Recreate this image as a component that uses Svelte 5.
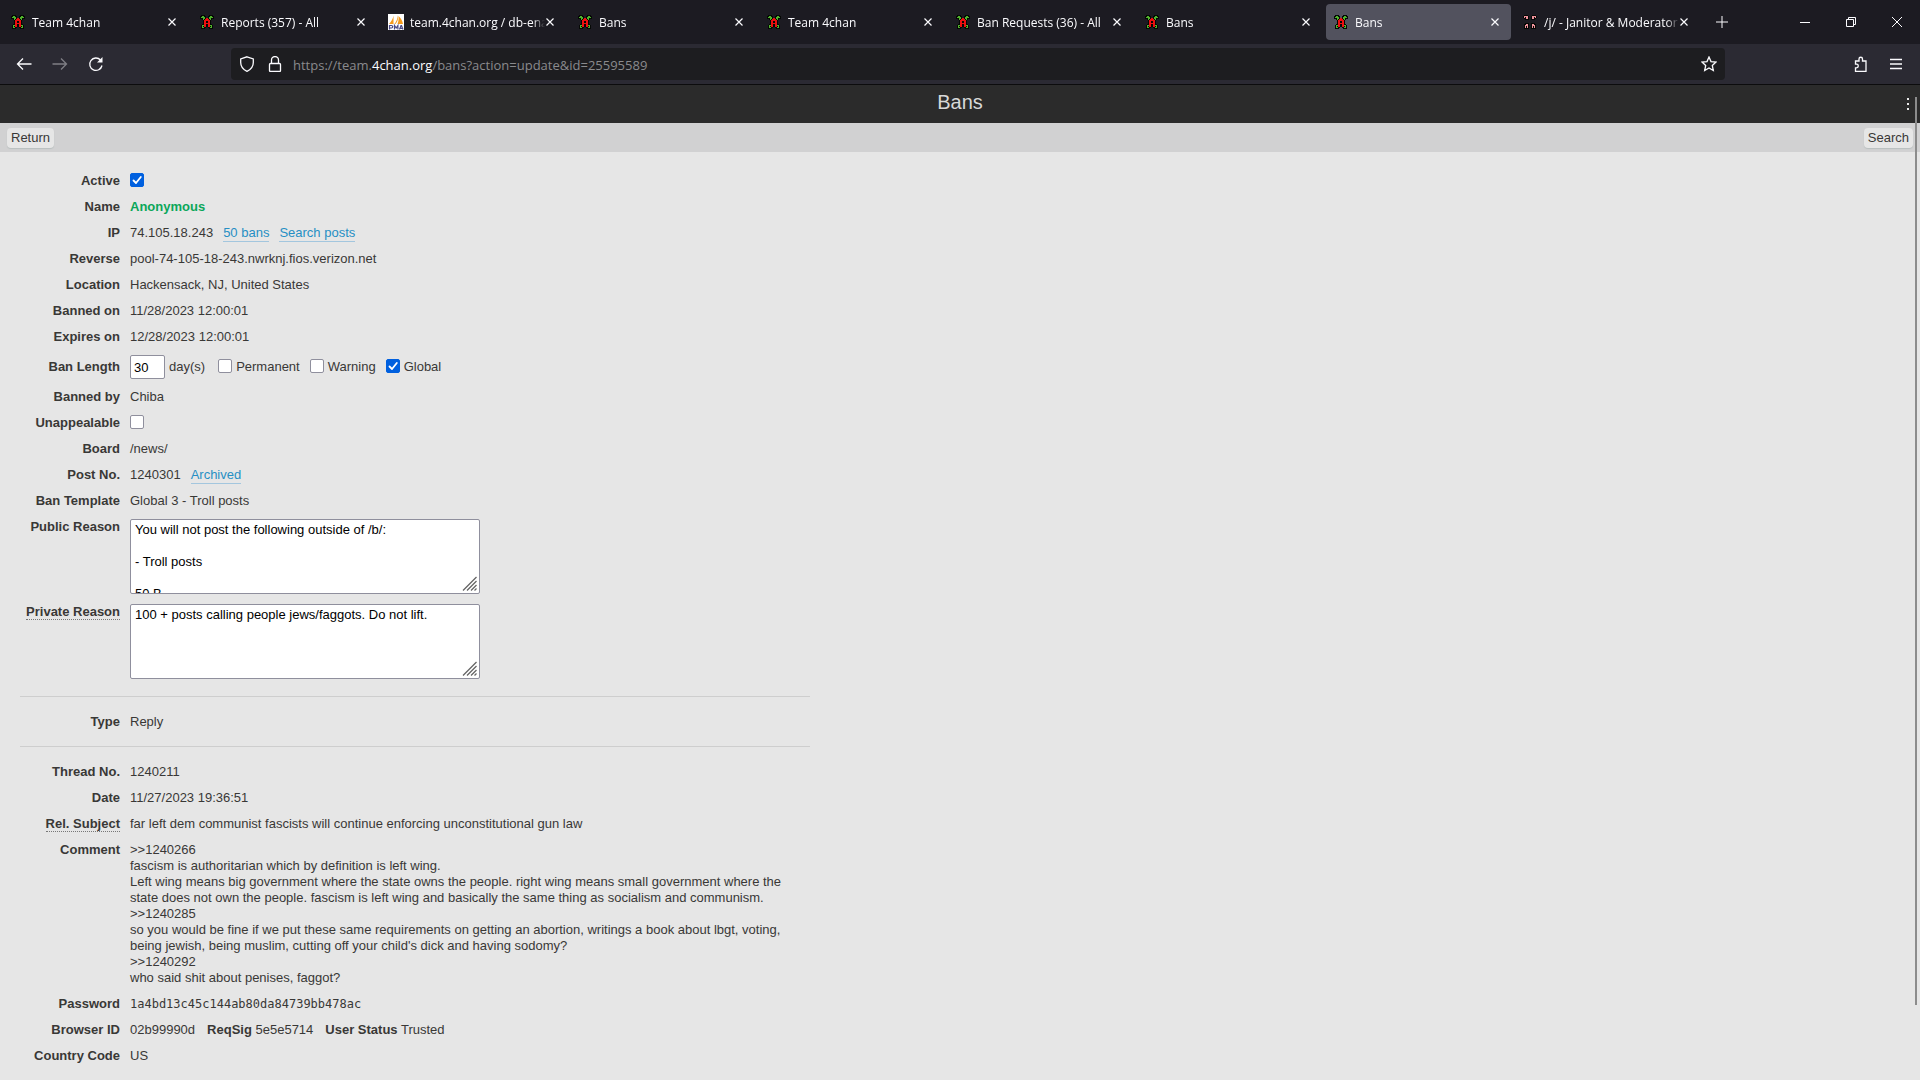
<script>
  const clover = [
    '................',
    '..kkkk....kkkk..',
    '.kkggkk..kkggkk.',
    '.kggggk..kggggk.',
    '.kkkggkrrkggkkk.',
    '...kgkrrrrkgk...',
    '....krrrrrrk....',
    '....krrkkrrk....',
    '....krrkkrrk....',
    '....krrrrrrk....',
    '...kkrrkkrrkk...',
    '..kggrrkkrrggk..',
    '..kgkrrkkrrkgk..',
    '..kggkk..kkggk..',
    '..kkkk....kkkk..',
    '................'
  ];
  const janitor = [
    '................',
    '..kkkk....kkkk..',
    '.kppppk..kppppk.',
    '.kpkppk..kppkpk.',
    '..kkppk..kppkk..',
    '...kkkk..kkkk...',
    '................',
    '................',
    '................',
    '...kkkk..kkkk...',
    '..kkppk..kppkk..',
    '..kpppk..kpppk..',
    '..kpkpk..kpkpk..',
    '..kpkpk..kpkpk..',
    '..kkkkk..kkkkk..',
    '................'
  ];
  const palette = { k: '#050805', g: '#4fb32c', r: '#ee0f0f', p: '#f0929c' };

  function pixels(rows) {
    return rows.flatMap((row, y) =>
      [...row].map((c, x) => ({ x, y, fill: palette[c] })).filter((p) => p.fill)
    );
  }

  const art = { clover: pixels(clover), janitor: pixels(janitor) };

  const tabs = [
    { title: 'Team 4chan', icon: 'clover' },
    { title: 'Reports (357) - All', icon: 'clover' },
    { title: 'team.4chan.org / db-ena', icon: 'pma' },
    { title: 'Bans', icon: 'clover' },
    { title: 'Team 4chan', icon: 'clover' },
    { title: 'Ban Requests (36) - All', icon: 'clover' },
    { title: 'Bans', icon: 'clover' },
    { title: 'Bans', icon: 'clover', active: true },
    { title: '/j/ - Janitor & Moderator', icon: 'janitor' }
  ];

  let active = $state(true);
  let unappealable = $state(false);
  let days = $state('30');
  let permanent = $state(false);
  let warning = $state(false);
  let global = $state(true);
  let publicReason = $state('You will not post the following outside of /b/:\n\n- Troll posts\n\n50 B');
  let privateReason = $state('100 + posts calling people jews/faggots. Do not lift.');

  const comment = [
    '>>1240266',
    'fascism is authoritarian which by definition is left wing.',
    'Left wing means big government where the state owns the people. right wing means small government where the state does not own the people. fascism is left wing and basically the same thing as socialism and communism.',
    '>>1240285',
    "so you would be fine if we put these same requirements on getting an abortion, writings a book about lbgt, voting, being jewish, being muslim, cutting off your child's dick and having sodomy?",
    '>>1240292',
    'who said shit about penises, faggot?'
  ].join('\n');
</script>

{#snippet grip()}
  <svg class="grip" viewBox="0 0 15 15" aria-hidden="true">
    <path d="M1 14.500 14.500 1M5 14.500 14.500 5M9 14.500 14.500 9M12.500 14.500l2-2" />
  </svg>
{/snippet}

<div class="window">
  <div class="tabbar">
    <div class="tabs">
      {#each tabs as tab}
        <div class="tab" class:current={tab.active}>
          <button class="tab-main">
            <svg class="favicon" viewBox="0 0 16 16" shape-rendering={tab.icon === 'pma' ? 'auto' : 'crispEdges'} aria-hidden="true">
              {#if tab.icon === 'pma'}
                <rect width="16" height="16" fill="#fff" />
                <path d="M5.500 1.500C5 5 3 8 1 10h4.500zM10 1c.5 4-.5 7-2.500 9H6.500C8.500 7.500 9.500 4.500 10 1zM10.500 2c2.500 2 4 5 4.500 8H9.500c1-2.500 1.300-5 1-8z" fill="#f59a1b" />
                <path d="M1.500 15.500v-4h2q1.200 0 1.200 1.200T3.500 14h-2M6.500 15.500v-4l1.700 2.500 1.700-2.500v4M11.500 15.500l1.500-4h.5l1.500 4M12 14.300h2.500" fill="none" stroke="#4a4a86" stroke-width="1.200" />
              {:else}
                {#each art[tab.icon] as p}
                  <rect x={p.x} y={p.y} width="1" height="1" fill={p.fill} />
                {/each}
              {/if}
            </svg>
            <span class="title">{tab.title}</span>
          </button>
          <button class="close" aria-label="Close tab">
            <svg viewBox="0 0 10 10"><path d="M1.500 1.500l7 7M8.500 1.500l-7 7" /></svg>
          </button>
        </div>
      {/each}
      <button class="newtab" aria-label="New tab">
        <svg viewBox="0 0 14 14"><path d="M7 1v12M1 7h12" /></svg>
      </button>
    </div>
    <div class="controls">
      <button aria-label="Minimize"><svg viewBox="0 0 12 12"><path d="M1 6.500h10" /></svg></button>
      <button aria-label="Restore"><svg viewBox="0 0 12 12"><path d="M1.500 3.500h7v7h-7zM3.500 3.500v-2h7v7h-2" /></svg></button>
      <button aria-label="Close window"><svg viewBox="0 0 12 12"><path d="M1 1l10 10M11 1L1 11" /></svg></button>
    </div>
  </div>

  <div class="navbar">
    <div class="nav-left">
      <button aria-label="Back"><svg viewBox="0 0 16 16"><path d="M7 2.500 1.500 8 7 13.500M1.500 8h14" /></svg></button>
      <button aria-label="Forward" class="dim"><svg viewBox="0 0 16 16"><path d="M9 2.500 14.500 8 9 13.500M14.500 8h-14" /></svg></button>
      <button aria-label="Reload"><svg viewBox="0 0 16 16"><path d="M14 9.500A6.200 6.200 0 1 1 12.500 4" /><path d="M14.500 1v5.500H9z" class="solid" /></svg></button>
    </div>
    <div class="urlbar">
      <svg viewBox="0 0 16 16" aria-hidden="true"><path d="M8 .8 14.300 3v3.500c0 4-2.800 7.200-6.300 8.800-3.500-1.600-6.300-4.800-6.300-8.800V3z" /></svg>
      <svg viewBox="0 0 16 16" aria-hidden="true"><path d="M4.500 7V4a3.500 3.500 0 0 1 7 0v3M3.500 7.500h9a1 1 0 0 1 1 1v6a1 1 0 0 1-1 1h-9a1 1 0 0 1-1-1v-6a1 1 0 0 1 1-1z" /></svg>
      <span class="url" role="textbox" tabindex="0" aria-label="Address">https://team.<b>4chan.org</b>/bans?action=update&amp;id=25595589</span>
      <button class="star" aria-label="Bookmark this page"><svg viewBox="0 0 16 16"><path d="M8 1l2 4.600 5 .5-3.700 3.400 1 5L8 12l-4.300 2.500 1-5L1 6.100l5-.5z" /></svg></button>
    </div>
    <div class="nav-right">
      <button aria-label="Extensions"><svg viewBox="0 0 16 16"><path d="M3.500 15.300v-3.500h1a1.700 1.700 0 0 0 0-3.600h-1V5h3.500V3a1.700 1.700 0 0 1 3.500 0v2h3.500v10.300z" /></svg></button>
      <button aria-label="Menu"><svg viewBox="0 0 16 16"><path d="M2 3.500h12M2 8h12M2 12.500h12" /></svg></button>
    </div>
  </div>

  <main class="page">
    <header>
      <h1>Bans</h1>
      <button class="dots" aria-label="More"><svg viewBox="0 0 2 14"><path d="M0 0h2v2H0zM0 5h2v2H0zM0 10h2v2H0z" /></svg></button>
    </header>
    <nav class="subbar">
      <a href="#return">Return</a>
      <a href="#search">Search</a>
    </nav>

    <form class="form">
      <section class="editable">
        <div class="row">
          <label class="label" for="active">Active</label>
          <div class="value"><input id="active" type="checkbox" bind:checked={active} /></div>
        </div>
        <div class="row"><span class="label">Name</span><div class="value name">Anonymous</div></div>
        <div class="row">
          <span class="label">IP</span>
          <div class="value links"><span>74.105.18.243</span><a href="#bans">50 bans</a><a href="#posts">Search posts</a></div>
        </div>
        <div class="row"><span class="label">Reverse</span><div class="value">pool-74-105-18-243.nwrknj.fios.verizon.net</div></div>
        <div class="row"><span class="label">Location</span><div class="value">Hackensack, NJ, United States</div></div>
        <div class="row"><span class="label">Banned on</span><div class="value">11/28/2023 12:00:01</div></div>
        <div class="row"><span class="label">Expires on</span><div class="value">12/28/2023 12:00:01</div></div>
        <div class="row middle">
          <label class="label" for="days">Ban Length</label>
          <div class="value length">
            <span class="pair"><input id="days" type="text" bind:value={days} /> day(s)</span>
            <label class="pair"><input type="checkbox" bind:checked={permanent} />Permanent</label>
            <label class="pair"><input type="checkbox" bind:checked={warning} />Warning</label>
            <label class="pair"><input type="checkbox" bind:checked={global} />Global</label>
          </div>
        </div>
        <div class="row"><span class="label">Banned by</span><div class="value">Chiba</div></div>
        <div class="row">
          <label class="label" for="unappealable">Unappealable</label>
          <div class="value"><input id="unappealable" type="checkbox" bind:checked={unappealable} /></div>
        </div>
        <div class="row"><span class="label">Board</span><div class="value">/news/</div></div>
        <div class="row">
          <span class="label">Post No.</span>
          <div class="value links"><span>1240301</span><a href="#archived">Archived</a></div>
        </div>
        <div class="row"><span class="label">Ban Template</span><div class="value">Global 3 - Troll posts</div></div>
        <div class="row">
          <label class="label" for="public">Public Reason</label>
          <div class="value area"><textarea id="public" bind:value={publicReason}></textarea>{@render grip()}</div>
        </div>
        <div class="row">
          <label class="label" for="private"><span class="hint">Private Reason</span></label>
          <div class="value area"><textarea id="private" bind:value={privateReason}></textarea>{@render grip()}</div>
        </div>
      </section>

      <section>
        <div class="row"><span class="label">Type</span><div class="value">Reply</div></div>
      </section>

      <section>
        <div class="row"><span class="label">Thread No.</span><div class="value">1240211</div></div>
        <div class="row"><span class="label">Date</span><div class="value">11/27/2023 19:36:51</div></div>
        <div class="row">
          <span class="label"><span class="hint">Rel. Subject</span></span>
          <div class="value">far left dem communist fascists will continue enforcing unconstitutional gun law</div>
        </div>
        <div class="row"><span class="label">Comment</span><div class="value comment">{comment}</div></div>
        <div class="row"><span class="label">Password</span><div class="value mono">1a4bd13c45c144ab80da84739bb478ac</div></div>
        <div class="row">
          <span class="label">Browser ID</span>
          <div class="value ids"><span>02b99990d</span><span><b>ReqSig</b> 5e5e5714</span><span><b>User Status</b> Trusted</span></div>
        </div>
        <div class="row"><span class="label">Country Code</span><div class="value">US</div></div>
      </section>
    </form>
    <div class="thumb"></div>
  </main>
</div>

<style>
  :global(body) {
    margin: 0;
    background: #e6e6e6;
  }
  * {
    box-sizing: border-box;
  }
  .window {
    display: flex;
    flex-direction: column;
    min-height: 100vh;
    font: 13px/16px 'Liberation Sans', Arial, sans-serif;
    color: #393836;
  }
  button {
    border: 0;
    padding: 0;
    background: none;
    color: inherit;
    font: inherit;
  }
  .tabbar button,
  .navbar button {
    display: flex;
    align-items: center;
    justify-content: center;
  }
  .tabbar,
  .navbar {
    color: #fbfbfe;
    font-family: 'Open Sans', 'Noto Sans', sans-serif;
  }
  .tabbar svg,
  .navbar svg {
    fill: none;
    stroke: currentColor;
  }

  .tabbar {
    display: flex;
    justify-content: space-between;
    height: 44px;
    background: #1c1b22;
    font-size: 12px;
  }
  .tabs {
    display: flex;
    flex: 1;
    min-width: 0;
    gap: 4px;
    padding: 4px 3px;
  }
  .tab {
    display: flex;
    align-items: center;
    flex: 0 1 185px;
    min-width: 0;
    height: 36px;
    padding: 0 11px 0 7px;
    border-radius: 4px;
  }
  .tab.current {
    background: #52525e;
  }
  .tabbar .tab-main {
    flex: 1;
    min-width: 0;
    gap: 6px;
    justify-content: flex-start;
  }
  .tabbar .favicon {
    flex: none;
    width: 16px;
    height: 16px;
    stroke: none;
  }
  .title {
    flex: 1;
    overflow: hidden;
    padding-top: 2px;
    white-space: nowrap;
    text-align: left;
    mask-image: linear-gradient(to left, transparent, #000 12px);
  }
  .close svg {
    width: 10px;
    height: 10px;
    stroke-width: 1.200;
  }
  .newtab {
    width: 36px;
  }
  .newtab svg {
    width: 14px;
    height: 14px;
  }
  .controls {
    display: flex;
  }
  .controls button {
    width: 46px;
  }
  .controls svg {
    width: 12px;
    height: 12px;
  }

  .navbar {
    display: flex;
    align-items: center;
    height: 41px;
    border-bottom: 1px solid #0c0c0d;
    background: #2b2a33;
    font-size: 13px;
  }
  .nav-left,
  .nav-right {
    display: flex;
    flex: none;
  }
  .nav-left {
    width: 231px;
    padding-left: 6px;
  }
  .nav-right {
    width: 195px;
    justify-content: flex-end;
    padding-right: 6px;
  }
  .navbar button {
    width: 36px;
    height: 32px;
  }
  .navbar svg {
    flex: none;
    width: 16px;
    height: 16px;
    stroke-width: 1.300;
  }
  .dim {
    opacity: 0.4;
  }
  .navbar .solid {
    fill: currentColor;
    stroke: none;
  }
  .urlbar {
    display: flex;
    flex: 1;
    align-items: center;
    min-width: 0;
    height: 32px;
    padding-left: 8px;
    gap: 12px;
    border-radius: 4px;
    background: #1d1d20;
  }
  .url {
    flex: 1;
    overflow: hidden;
    margin-left: -2px;
    padding-top: 2px;
    white-space: nowrap;
    color: #8a8a8d;
  }
  .url b {
    font-weight: 400;
    color: #fbfbfe;
  }
  .navbar .star {
    width: 32px;
  }

  .page {
    position: relative;
    flex: 1;
    background: #e6e6e6;
  }
  header {
    display: flex;
    position: relative;
    justify-content: center;
    height: 38px;
    background: #2b2b2b;
    color: #d8d8d8;
  }
  h1 {
    margin: 0;
    font-size: 20px;
    font-weight: 400;
    line-height: 34px;
  }
  .dots {
    position: absolute;
    top: 13px;
    right: 11px;
    height: 14px;
  }
  .dots svg {
    display: block;
    width: 2px;
    height: 14px;
    fill: #e8e8e8;
  }
  .subbar {
    display: flex;
    align-items: center;
    justify-content: space-between;
    height: 29px;
    padding: 0 7px;
    background: #d1d1d2;
  }
  .subbar a {
    padding: 2px 4px;
    border-radius: 4px;
    background: #e6e6e6;
    box-shadow: 0 1px 1px #b9bfbf;
    color: inherit;
    text-decoration: none;
  }

  .form {
    max-width: 810px;
    padding: 16px 0 0 20px;
  }
  section {
    padding-bottom: 11px;
  }
  section + section {
    padding-top: 12px;
    border-top: 1px solid #cecece;
  }
  .editable {
    padding-bottom: 12px;
  }
  section:last-child {
    padding-bottom: 0;
  }
  .row {
    display: grid;
    grid-template-columns: 100px 1fr;
    column-gap: 10px;
    padding: 5px 0;
  }
  .middle {
    align-items: center;
  }
  .label {
    font-weight: 700;
    text-align: right;
  }
  .hint {
    border-bottom: 1px dotted #777;
  }
  .name {
    color: #0ba75a;
    font-weight: 700;
  }
  .value {
    min-width: 0;
  }
  .links,
  .length {
    display: flex;
    gap: 10px;
  }
  .ids {
    display: flex;
    gap: 12px;
  }
  .links {
    height: 16px;
  }
  .links a {
    height: 17px;
    border-bottom: 1px solid #a3c6de;
    color: #268fc4;
    text-decoration: none;
  }
  .pair {
    display: flex;
    align-items: center;
    gap: 4px;
  }
  .pair:first-child {
    margin-right: 3px;
  }
  input[type='checkbox'] {
    display: block;
    appearance: none;
    width: 14px;
    height: 14px;
    margin: 0 0 2px;
    border: 1px solid #8f8f9d;
    border-radius: 2px;
    background: #fff;
  }
  input[type='checkbox']:checked {
    border-color: #0060df;
    background: #0060df
      url("data:image/svg+xml,%3Csvg xmlns='http://www.w3.org/2000/svg' viewBox='0 0 12 12'%3E%3Cpath d='M2.500 6.500l2.500 2.500 4.800-6' fill='none' stroke='white' stroke-width='1.800' stroke-linecap='round' stroke-linejoin='round'/%3E%3C/svg%3E")
      center / 12px no-repeat;
  }
  input[type='text'],
  textarea {
    display: block;
    margin: 0;
    border: 1px solid #8f8f9d;
    border-radius: 2px;
    background: #fff;
    color: #000;
    font: inherit;
  }
  input[type='text'] {
    width: 35px;
    height: 24px;
    padding: 0 3px;
  }
  textarea {
    width: 350px;
    height: 75px;
    padding: 2px 4px;
    overflow: hidden;
    resize: none;
  }
  .area {
    position: relative;
    width: 350px;
  }
  .grip {
    position: absolute;
    right: 3px;
    bottom: 3px;
    width: 15px;
    height: 15px;
    fill: none;
    stroke: #666;
    stroke-width: 1.300;
  }
  .comment {
    white-space: pre-wrap;
  }
  .mono {
    font-family: 'DejaVu Sans Mono', monospace;
    font-size: 12px;
  }
  .thumb {
    position: absolute;
    top: 12px;
    right: 3px;
    bottom: 75px;
    width: 2px;
    background: #8c8c8c;
  }
</style>
